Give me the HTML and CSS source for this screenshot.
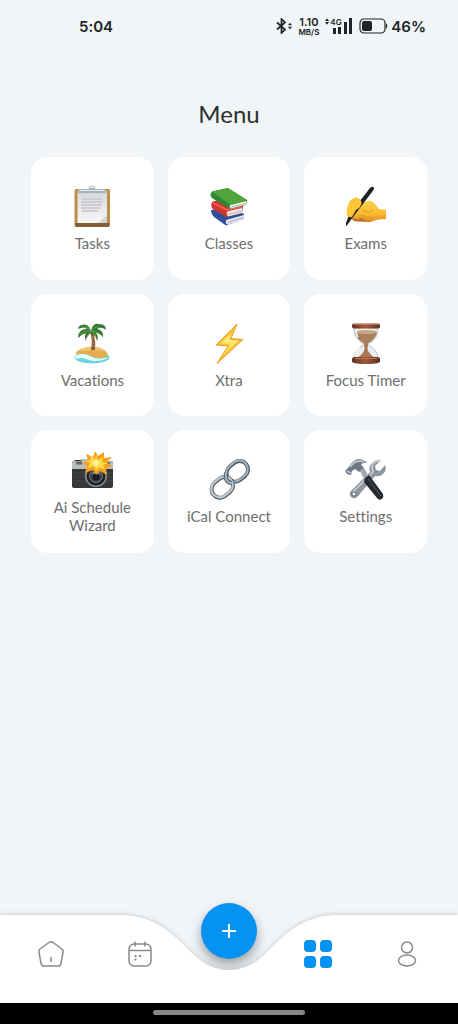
FILE: index.html
```html
<!doctype html>
<html lang="en">
  <head>
    <meta charset="utf-8">
    <meta name="viewport" content="width=device-width, initial-scale=1">
    <title>Menu</title>
    <link rel="stylesheet" href="styles.css">
  </head>
  <body>
    <div class="screen">

      <header class="status">
        <span class="time">5:04</span>
        <div class="indicators">
          <svg class="bluetooth" viewBox="0 0 16 16">
            <path d="M1 4.500l8 7L5.500 15V1L9 4.500l-8 7" fill="none" stroke="#202426" stroke-width="1.700"/>
            <path d="M12 7.300l2-2.500 2 2.500zM12 8.700l2 2.500 2-2.500z" fill="#202426"/>
          </svg>
          <span class="speed"><span class="rate">1.10</span><span class="unit">MB/S</span></span>
          <span class="signal">
            <svg class="arrows" viewBox="0 0 5 8"><path d="M0 3.500L2.500 0 5 3.500zM0 4.500L2.500 8 5 4.500z" fill="#202426"/></svg>
            <span class="network">4G</span>
            <svg class="bars" viewBox="0 0 20 16">
              <path d="M0 10h3v6H0zM5 9h3v7H5zM11 4h3v12h-3zM16 0h3v16h-3z" fill="#202426"/>
            </svg>
          </span>
          <svg class="battery" viewBox="0 0 29 16">
            <rect x="1" y="1" width="25" height="14" rx="4" fill="none" stroke="#202426" stroke-width="1.200"/>
            <rect x="3" y="3" width="10" height="10" rx="2" fill="#202426"/>
            <path d="M27 5q2.500 3 0 6z" fill="#202426"/>
          </svg>
          <span class="percent">46%</span>
        </div>
      </header>

      <main class="content">
        <h1 class="title">Menu</h1>

        <div class="grid">

          <button class="card">
            <svg class="icon" viewBox="0 0 44 44">
              <defs>
                <linearGradient id="paper" x1="0" y1="0" x2="0" y2="1"><stop offset="0" stop-color="#d5d7da"/><stop offset="1" stop-color="#f7f7f8"/></linearGradient>
              </defs>
              <rect x="4.500" y="4" width="35.500" height="38" rx="2" fill="#c08d47"/>
              <path d="M5 38h34.500v2a2 2 0 0 1-2 2H7a2 2 0 0 1-2-2z" fill="#866033"/>
              <rect x="7.500" y="6" width="29.500" height="32" fill="url(#paper)"/>
              <path d="M12 14h20M11 17h21M11 20h21M11 23h19M12 26h16" stroke="#cbcdd0" stroke-width="2"/>
              <path d="M28 38l9-8v8z" fill="#d6d6d8"/>
              <circle cx="22" cy="3.500" r="2.500" fill="none" stroke="#b5bdc4" stroke-width="1.200"/>
              <path d="M8 6q0-2 3-2h6q2 0 3-1h4q1 1 3 1h6q3 0 3 2v2H8z" fill="#aab3ba"/>
              <path d="M9 5.500h26" stroke="#dfe5e9"/>
            </svg>
            <span class="label">Tasks</span>
          </button>

          <button class="card">
            <svg class="icon" viewBox="0 0 44 44">
              <path d="M4 25l17-3 16 7v5l-18 6.500L7 32q-3-3-3-7z" fill="#2f4f9b"/>
              <path d="M19 35l18-5v4.500l-16 5q-3 0-2-4.500z" fill="#e6e8ee"/>
              <path d="M20 37.500l17-5" stroke="#a9b0c4"/>
              <path d="M5 17l14-5 17 9-1 7-16 4L6 24q-3-3-1-7z" fill="#d3342d"/>
              <path d="M6 18l14 7 15-3" fill="none" stroke="#ed655b" stroke-width="1.500"/>
              <path d="M20 26.500l15-3.500v5l-14 3.500q-2-2-1-5z" fill="#eee9e6"/>
              <path d="M21 29.500l14-3.500" stroke="#bbb1ad"/>
              <path d="M5 6.500L21 3l19 12-1 5-16 4L5 13q-3-3 0-6.500z" fill="#2d8931"/>
              <path d="M5 6.500L21 3l19 12-17 4.500z" fill="#50a63b"/>
              <path d="M23 20l16-4v3.500l-15 4q-2-1-1-3.500z" fill="#f1f2e9"/>
              <path d="M24 22l15-3.700" stroke="#b7beae"/>
            </svg>
            <span class="label">Classes</span>
          </button>

          <button class="card">
            <svg class="icon" viewBox="0 0 44 44">
              <defs>
                <linearGradient id="skin" x1="0" y1="0" x2="0" y2="1"><stop offset="0" stop-color="#ffd653"/><stop offset=".7" stop-color="#f9b92b"/><stop offset="1" stop-color="#dc8928"/></linearGradient>
              </defs>
              <path d="M8 31q-1 5 4 5.500l14 .5q4-1 5-4L22 26z" fill="#bd722c"/>
              <path d="M3 29q-1-4 1-9l6-5q4-2 8 0l3 2q5-3 9 1l5 6 7 1v9l-8 .5-5 1.500q-5 1-8-1l-3-2-6 1q-5-1-7-2-2-1-2-3z" fill="url(#skin)"/>
              <path d="M19 25q5 4 10 0M14 31q5-1 8 1 3 2 6 0" fill="none" stroke="#e39a2a" stroke-width="1.200"/>
              <path d="M14 36v-2M19 37v-2M24 37v-2" stroke="#dc9432"/>
              <path d="M26 3q2-2 3.500-1 1 1 0 3L7.500 34 2.500 41q-1-1-.5-3L5 30z" fill="#1d1f22"/>
              <path d="M5 17q5-6 9-4 5 3 3 7-1 3-5 5l-4 7q-4 1-5-3z" fill="#fdc63a"/>
            </svg>
            <span class="label">Exams</span>
          </button>

          <button class="card">
            <svg class="icon" viewBox="0 0 44 44">
              <ellipse cx="22" cy="35.500" rx="17.500" ry="6" fill="#69d6d9"/>
              <path d="M5 34q9-4 15 0 9 5 18 1-3 4-13 4-5 0-9-2-5-2-10 0z" fill="#e8fcf8"/>
              <path d="M5 32q4-7 17-7.500 13 .5 16 8-2 4-10 3.500-4 0-9-3-5-2-14-1z" fill="#e7ab4d"/>
              <path d="M9 29q5-4 13-4.500 10 1 14 5-12-2-27-.5z" fill="#f2c66f"/>
              <path d="M20 10q3 8 1 18h4q1-10-2-18z" fill="#8a5d35"/>
              <path d="M21 15h3M21.500 18h3M21.500 21h3M21 24h3.500" stroke="#b98653"/>
              <path d="M21 9Q18 1 12 3q-3 0-4 4 6-3 9 0-9 0-9 9 4-4 8-5-2 4 0 8 0-5 5-8 5 2 6 8 2-5-1-8 5 0 7 5 1-8-6-9 5-3 9 1 0-6-7-6-6-2-8 7z" fill="#347934"/>
              <path d="M21 9q-4-5-9-4M21 9q4-5 9-4M21 9q7 0 10 4M21 9q-8-1-11 4M21 9q-3 3-4 6M22 9q3 3 4 6" fill="none" stroke="#62a147"/>
            </svg>
            <span class="label">Vacations</span>
          </button>

          <button class="card">
            <svg class="icon" viewBox="0 0 44 44">
              <path d="M30 2L9 23l12 1-11 17.500L36 17.500l-12-1z" fill="#f9bc32" stroke="#ed9d28" stroke-linejoin="round"/>
              <path d="M26 9L13 21.500l10 1-7 11 15-14.500-10-1z" fill="#ffe66b" stroke="#fbd043"/>
              <path d="M24 14l-4 4.500 11 1" fill="none" stroke="#fff5b4"/>
            </svg>
            <span class="label">Xtra</span>
          </button>

          <button class="card">
            <svg class="icon" viewBox="0 0 44 44">
              <defs>
                <linearGradient id="wood"><stop offset="0" stop-color="#643222"/><stop offset=".5" stop-color="#a05a3c"/><stop offset="1" stop-color="#5a2d20"/></linearGradient>
              </defs>
              <path d="M10 6h24q0 11-9 15.500v2Q34 28 34 37H10q0-9 9-13.500v-2Q10 17 10 6z" fill="#e9eef1" stroke="#bdc8ce"/>
              <path d="M11 10q11 2 22 0-1 7-9 11.500V25h-4v-3.500Q12 17 11 10z" fill="#a9805b"/>
              <ellipse cx="22" cy="10" rx="11" ry="2" fill="#c9a681"/>
              <path d="M21 24h2l1 5q3 5 7 7H13q5-3 7-7z" fill="#ac7655"/>
              <path d="M12 34q0-5 4-8M12 8q0 4 2 7" fill="none" stroke="#fff" stroke-width="1.500"/>
              <rect x="8" y="1.500" width="28" height="5" rx="2" fill="url(#wood)"/>
              <path d="M8 37q0-2 3-2h22q3 0 3 2v3q-3 2-14 2T8 40z" fill="url(#wood)"/>
              <path d="M10 2.500h24M11 36.500h22" stroke="#b97855"/>
            </svg>
            <span class="label">Focus Timer</span>
          </button>

          <button class="card">
            <svg class="icon" viewBox="0 0 44 44">
              <path d="M4 12q0-1 2-1h5l1-1h22l1 2h6q2 0 2 2v23q0 2-2 2H4q-2 0-2-2V14q0-2 2-2z" fill="#343638"/>
              <path d="M2 20v-6q0-2 3-2h6l1-2h22l1 2h5q3 0 3 2v6z" fill="#b9bdbb"/>
              <rect x="6" y="12.500" width="6" height="3" fill="#65696a"/>
              <rect x="32" y="13" width="8" height="5" rx="1" fill="#626b57"/>
              <path d="M3 24h13M3 28h13M3 32h14M37 24h5M37 28h5M37 32h5" stroke="#434547"/>
              <circle cx="26" cy="27" r="11" fill="#8c9192"/>
              <circle cx="26" cy="27" r="9.500" fill="#1e2224"/>
              <circle cx="26" cy="27" r="6.500" fill="#3b4148" stroke="#777d7e"/>
              <circle cx="26" cy="28" r="3.500" fill="#161b22"/>
              <path d="M22 25q4-4 8 0" fill="none" stroke="#8c969e" stroke-width="1.500"/>
              <path d="M25 2l3 5 6-4 0 6 8-1-5 5 5 5-6 1 1 7-7-4-4 4-3-5-8 3 2-7-5-3 6-2-2-7 7 3z" fill="#f5a021"/>
              <path d="M26 6l2 5 5-3-1 5 6 1-5 2 2 5-6-3-3 4-2-5-6 2 2-5-4-2 5-1-1-5 5 4z" fill="#ffdd42"/>
              <circle cx="26" cy="14" r="3" fill="#fff4a1"/>
            </svg>
            <span class="label">Ai Schedule Wizard</span>
          </button>

          <button class="card">
            <svg class="icon" viewBox="0 0 44 44">
              <g fill="none">
                <g transform="rotate(-40 30 13)">
                  <rect x="18.500" y="5" width="23" height="17" rx="8.500" stroke="#4e5a65" stroke-width="4"/>
                  <rect x="18.500" y="4.500" width="23" height="17" rx="8.500" stroke="#a7b4bd" stroke-width="2"/>
                </g>
                <g transform="rotate(-40 15 29)">
                  <rect x="3.500" y="21" width="23" height="17" rx="8.500" stroke="#596571" stroke-width="4"/>
                  <rect x="3.500" y="20.500" width="23" height="17" rx="8.500" stroke="#c0cbd2" stroke-width="2.200"/>
                </g>
                <path d="M19 15q-1 5 1 8 2 2 5 2" stroke="#4e5a65" stroke-width="4"/>
                <path d="M19 15q-1 5 1 8 2 2 5 2" stroke="#a7b4bd" stroke-width="2"/>
              </g>
            </svg>
            <span class="label">iCal Connect</span>
          </button>

          <button class="card">
            <svg class="icon" viewBox="0 0 44 44">
              <path d="M37 2l-6 6 1 4 4 1 5-6q2 6-2 9-3 3-8 2L14 38q-3 4-7 1-3-4 1-7l18-18q-2-5 2-9 4-4 9-3z" fill="#8d969f"/>
              <path d="M36 3q-7-1-8 6l1 5L9 34" fill="none" stroke="#c7ced4" stroke-width="1.700"/>
              <circle cx="10" cy="36" r="2" fill="#fff" stroke="#626c75"/>
              <path d="M15 11l4-3 7 13-4 4z" fill="#9da8b2"/>
              <path d="M21 20l4-3 14 19q1 3-1 5-3 2-5-1L20 24z" fill="#25282c"/>
              <path d="M24 21l13 17" stroke="#54595f"/>
              <path d="M4 10q5-9 12-9l7 3-6 2 2 4-4 4-4-3-3 2-1 4-4-1-2-3z" fill="#6c7781"/>
              <path d="M6 9q4-6 10-6l4 1M3 13l4 2" fill="none" stroke="#c0c8ce" stroke-width="1.800"/>
            </svg>
            <span class="label">Settings</span>
          </button>

        </div>
      </main>

      <nav class="tabbar">
        <button class="add" aria-label="Add">
          <svg viewBox="0 0 16 16"><path d="M8 1v14M1 8h14" stroke="#fff" stroke-width="2"/></svg>
        </button>
        <div class="shape">
          <div class="side"></div>
          <svg class="notch" viewBox="0 0 218 88">
            <path d="M0 0C36 0 54 20 72 38C82 48 94 55 109 55S136 48 146 38C164 20 182 0 218 0V88H0z" fill="#fff"/>
          </svg>
          <div class="side"></div>
        </div>
        <div class="tabs">
          <a class="tab" href="#home" aria-label="Home">
            <svg viewBox="0 0 28 28"><path d="M12 2.500q2-1.500 4 0l9 6.500q1.500 1 1 3l-2 11.500q-.5 2.500-3 2.500H7q-2.500 0-3-2.500L2 12q-.5-2 1-3zM14 17v5"/></svg>
          </a>
          <a class="tab" href="#calendar" aria-label="Calendar">
            <svg viewBox="0 0 28 28"><rect x="3" y="4" width="22" height="22" rx="5"/><path d="M3 10.500h22M9 1.500v5M19 1.500v5"/><path d="M8.500 16h2M13 16h2M8.500 19.500h2" stroke-width="2"/></svg>
          </a>
          <span class="tab"></span>
          <a class="tab active" href="#menu" aria-label="Menu">
            <svg viewBox="0 0 28 28"><rect x="0" y="0" width="12" height="12" rx="4"/><rect x="16" y="0" width="12" height="12" rx="4"/><rect x="0" y="16" width="12" height="12" rx="4"/><rect x="16" y="16" width="12" height="12" rx="4"/></svg>
          </a>
          <a class="tab" href="#profile" aria-label="Profile">
            <svg viewBox="0 0 28 28"><circle cx="14" cy="7.500" r="5.500"/><ellipse cx="14" cy="20.500" rx="8.500" ry="5.500"/></svg>
          </a>
        </div>
      </nav>

      <div class="gesture"><div class="handle"></div></div>
    </div>
  </body>
</html>
```
FILE: styles.css
```css
* {
  box-sizing: border-box;
}

body {
  margin: 0;
  background-color: #f1f5f7;
  font-family: Lato, "Open Sans", sans-serif;
  font-variant-ligatures: none;
  color: #6e6e6e;
}

button {
  border: 0;
  padding: 0;
  font: inherit;
  font-variant-ligatures: none;
  color: inherit;
  cursor: pointer;
}

.screen {
  display: flex;
  flex-direction: column;
  min-height: 100vh;
}

/* status bar */
.status {
  display: flex;
  align-items: center;
  justify-content: space-between;
  height: 52px;
  padding: 0 32px 0 79px;
  font-family: Inter, sans-serif;
  font-weight: 600;
  font-size: 15px;
  color: #202426;
}

.indicators {
  display: flex;
  align-items: center;
}

.bluetooth {
  width: 16px;
  height: 16px;
  margin-right: 6px;
}

.speed {
  display: flex;
  flex-direction: column;
  align-items: center;
  margin-right: 6px;
}

.rate {
  font-size: 11px;
  line-height: 12px;
}

.unit {
  font-size: 8px;
  line-height: 8px;
}

.signal {
  display: flex;
  position: relative;
  width: 28px;
  margin-right: 6px;
  justify-content: flex-end;
}

.bars {
  width: 20px;
  height: 16px;
}

.arrows {
  width: 4px;
  height: 7px;
  margin-right: auto;
}

/* sits over the short bars */
.network {
  position: absolute;
  top: 0;
  left: 5px;
  font-size: 8px;
  line-height: 8px;
}

.battery {
  width: 29px;
  height: 16px;
  margin-right: 3px;
}

/* menu */
.content {
  flex: 1;
  padding: 44px 31px 24px;
}

.title {
  margin: 0 0 25px;
  font-size: 24px;
  line-height: 36px;
  font-weight: 400;
  text-align: center;
  color: #2d3032;
}

.grid {
  display: grid;
  grid-template-columns: repeat(3, 1fr);
  gap: 14px;
}

.card {
  display: flex;
  flex-direction: column;
  align-items: center;
  justify-content: center;
  gap: 5px;
  aspect-ratio: 1;
  padding: 0 16px;
  border-radius: 16px;
  background-color: #fff;
}

.icon {
  width: 44px;
  height: 44px;
}

.label {
  font-size: 15px;
  line-height: 18px;
}

/* bottom bar */
.tabbar {
  position: relative;
  height: 88px;
}

.add {
  position: absolute;
  top: -12px;
  left: 50%;
  display: flex;
  align-items: center;
  justify-content: center;
  width: 56px;
  height: 56px;
  margin-left: -28px;
  border-radius: 50%;
  background-color: #0592f2;
  box-shadow: 0 6px 12px rgba(0, 0, 0, 0.35);
}

.add svg {
  width: 16px;
  height: 16px;
}

.shape {
  position: absolute;
  inset: 0;
  display: flex;
  filter: drop-shadow(0 -1px 2px rgba(0, 0, 0, 0.15));
  pointer-events: none;
}

.side {
  flex: 1;
  background-color: #fff;
}

.notch {
  width: 218px;
  height: 88px;
}

.tabs {
  position: relative;
  display: flex;
  height: 100%;
  padding: 0 6px 10px;
  pointer-events: none;
}

.tab {
  flex: 1;
  display: flex;
  align-items: center;
  justify-content: center;
}

a.tab {
  pointer-events: auto;
}

.tab svg {
  width: 28px;
  height: 28px;
  fill: none;
  stroke: #8a8a8a;
  stroke-width: 1.5;
}

.active svg {
  fill: #0592f2;
  stroke: none;
}

.gesture {
  position: relative;
  display: flex;
  justify-content: center;
  height: 21px;
  padding-top: 7px;
  background-color: #000;
}

.handle {
  width: 33%;
  height: 5px;
  border-radius: 3px;
  background-color: #878787;
}
```
